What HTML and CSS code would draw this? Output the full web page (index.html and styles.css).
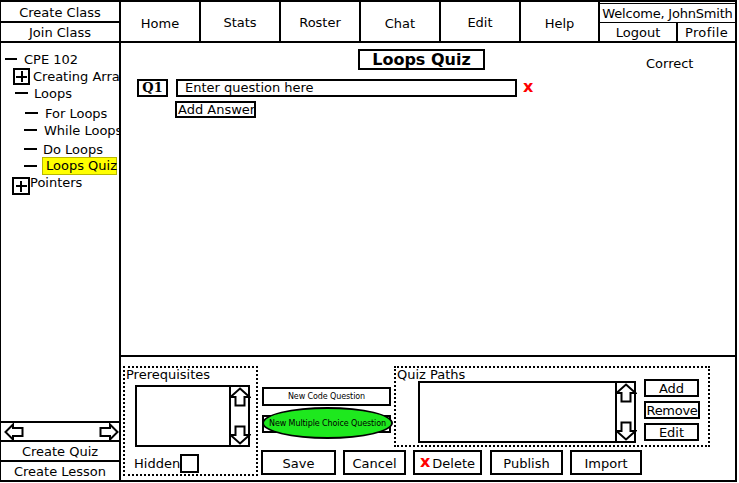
FILE: index.html
```html
<!DOCTYPE html>
<html>
<head>
<meta charset="utf-8">
<title>Loops Quiz</title>
<link rel="stylesheet" href="styles.css">
</head>
<body>
<div class="app">
  <aside class="side">
    <div class="side-btn tall">Create Class</div>
    <div class="side-btn std">Join Class</div>
    <div class="tree">
      <div class="node n1"><span class="dash d12"></span><span class="lbl g7">CPE 102</span></div>
      <div class="node n2"><span class="plus"></span><span class="lbl g3">Creating Arrays</span></div>
      <div class="node n3"><span class="dash"></span><span class="lbl g6">Loops</span></div>
      <div class="node n4"><span class="dash"></span><span class="lbl g7">For Loops</span></div>
      <div class="node n5"><span class="dash"></span><span class="lbl g7">While Loops</span></div>
      <div class="node n6"><span class="dash"></span><span class="lbl g6">Do Loops</span></div>
      <div class="node n7"><span class="dash"></span><span class="lbl hl">Loops Quiz</span></div>
      <div class="node n8"><span class="plus big"></span><span class="lbl up">Pointers</span></div>
    </div>
    <div class="hscroll">
      <svg class="harrow" width="20" height="18" viewBox="0 0 20 18"><path d="M1.5 9 L9 1.5 L9 5 L18.5 5 L18.5 13 L9 13 L9 16.5 Z"/></svg>
      <svg class="harrow" width="20" height="18" viewBox="0 0 20 18"><path d="M18.5 9 L11 1.5 L11 5 L1.5 5 L1.5 13 L11 13 L11 16.5 Z"/></svg>
    </div>
    <div class="side-btn std">Create Quiz</div>
    <div class="side-btn last">Create Lesson</div>
  </aside>

  <div class="content">
    <nav class="nav">
      <div class="nav-item low">Home</div>
      <div class="nav-item">Stats</div>
      <div class="nav-item">Roster</div>
      <div class="nav-item low">Chat</div>
      <div class="nav-item">Edit</div>
      <div class="nav-item help low">Help</div>
      <div class="user">
        <div class="welcome">Welcome, JohnSmith</div>
        <div class="user-links">
          <div class="logout">Logout</div>
          <div class="profile">Profile</div>
        </div>
      </div>
    </nav>

    <main class="editor">
      <div class="head">
        <div class="title">Loops Quiz</div>
        <div class="correct">Correct</div>
      </div>
      <div class="qrow">
        <div class="qnum">Q1</div>
        <div class="qinput">Enter question here</div>
        <span class="xmark">x</span>
      </div>
      <div class="add-answer">Add Answer</div>
    </main>

    <section class="panel">
      <div class="fs prereq">
        <div class="fs-label">Prerequisites</div>
        <div class="listwrap pre-list">
          <div class="list small"></div>
          <div class="vscroll">
            <svg class="varrow" width="22" height="20" viewBox="0 0 22 20"><path d="M11 1.5 L20.5 10 L15.5 10 L15.5 18.5 L6.5 18.5 L6.5 10 L1.5 10 Z"/></svg>
            <svg class="varrow" width="22" height="20" viewBox="0 0 22 20"><path d="M11 18.5 L20.5 10 L15.5 10 L15.5 1.5 L6.5 1.5 L6.5 10 L1.5 10 Z"/></svg>
          </div>
        </div>
        <div class="hidden-row"><span>Hidden</span><span class="check"></span></div>
      </div>

      <div class="rcol">
        <div class="rtop">
          <div class="qbtns">
            <div class="btn-code">New Code Question</div>
            <div class="mc">
              <div class="mc-rect"></div>
              <div class="mc-ellipse">New Multiple Choice Question</div>
            </div>
          </div>
          <div class="fs paths">
            <div class="fs-label">Quiz Paths</div>
            <div class="paths-row">
              <div class="listwrap">
                <div class="list wide"></div>
                <div class="vscroll">
                  <svg class="varrow" width="22" height="20" viewBox="0 0 22 20"><path d="M11 1.5 L20.5 10 L15.5 10 L15.5 18.5 L6.5 18.5 L6.5 10 L1.5 10 Z"/></svg>
                  <svg class="varrow" width="22" height="20" viewBox="0 0 22 20"><path d="M11 18.5 L20.5 10 L15.5 10 L15.5 1.5 L6.5 1.5 L6.5 10 L1.5 10 Z"/></svg>
                </div>
              </div>
              <div class="pbtns">
                <div class="pbtn">Add</div>
                <div class="pbtn remove">Remove</div>
                <div class="pbtn">Edit</div>
              </div>
            </div>
          </div>
        </div>
        <div class="actions">
          <div class="abtn w-save">Save</div>
          <div class="abtn w-cancel">Cancel</div>
          <div class="abtn w-delete"><span class="xmark small-x">x</span>Delete</div>
          <div class="abtn w-publish">Publish</div>
          <div class="abtn w-import">Import</div>
        </div>
      </div>
    </section>
  </div>
</div>
</body>
</html>
```

FILE: styles.css
```css
* { box-sizing: border-box; }
html, body { margin: 0; padding: 0; background: #fff; }
body {
  font-family: "DejaVu Sans", "Liberation Sans", sans-serif;
  font-size: 13px;
  color: #000;
}

.app {
  display: flex;
  width: 737px;
  height: 482px;
  border-top: 2px solid #000;
  border-left: 1px solid #000;
  border-bottom: 2px solid #000;
}

/* ---------- sidebar ---------- */
.side {
  width: 120px;
  flex: none;
  display: flex;
  flex-direction: column;
  border-right: 2px solid #000;
  overflow: hidden;
}
.side-btn {
  flex: none;
  display: flex;
  align-items: center;
  justify-content: center;
  border-bottom: 2px solid #000;
  white-space: nowrap;
  line-height: 1;
  padding-top: 1px;
}
.side-btn.tall { height: 21px; }
.side-btn.std { height: 20px; }
.side-btn.last { height: 18px; border-bottom: 0; }

.tree {
  flex: 1;
  min-height: 0;
  overflow: hidden;
}
.node {
  display: flex;
  align-items: center;
  white-space: nowrap;
  line-height: 15px;
}
.n1 { margin-top: 8px; height: 16px; padding-left: 4px; }
.n2 { margin-top: 1px; height: 17px; padding-left: 12px; }
.n3 { margin-top: 1px; height: 14px; padding-left: 14px; }
.n4 { margin-top: 5px; height: 16px; padding-left: 24px; }
.n5 { margin-top: 1px; height: 16px; padding-left: 23px; }
.n6 { margin-top: 3px; height: 16px; padding-left: 23px; }
.n7 { margin-top: 0; height: 18px; padding-left: 23px; }
.n8 { margin-top: 2px; height: 18px; padding-left: 11px; align-items: flex-start; }

.dash {
  flex: none;
  width: 13px;
  height: 2px;
  background: #000;
}
.dash.d12 { width: 12px; }
.lbl.g7 { margin-left: 7px; }
.lbl.g6 { margin-left: 6px; }
.lbl.g3 { margin-left: 3px; }
.lbl.up { margin-top: -2px; }
.lbl.hl {
  margin-left: 5px;
  width: 75px;
  height: 18px;
  padding-left: 3px;
  background: #ffff00;
  border: 1px solid #b8b800;
  line-height: 16px;
}

.plus {
  flex: none;
  width: 17px;
  height: 17px;
  border: 2px solid #000;
  background:
    linear-gradient(#000, #000) center / 11px 2px no-repeat,
    linear-gradient(#000, #000) center / 2px 11px no-repeat;
}
.plus.big { width: 18px; height: 18px; }

.hscroll {
  flex: none;
  height: 21px;
  border-top: 2px solid #000;
  border-bottom: 2px solid #000;
  display: flex;
  align-items: center;
  justify-content: space-between;
  padding-left: 3px;
}
.harrow { display: block; }
.harrow path, .varrow path {
  fill: #fff;
  stroke: #000;
  stroke-width: 2;
  stroke-linejoin: miter;
}

/* ---------- right side ---------- */
.content {
  flex: 1;
  min-width: 0;
  display: flex;
  flex-direction: column;
  border-right: 2px solid #000;
}

.nav {
  flex: none;
  height: 41px;
  display: flex;
  border-bottom: 2px solid #000;
}
.nav-item {
  width: 80px;
  border-right: 2px solid #000;
  display: flex;
  align-items: center;
  justify-content: center;
  padding-top: 2px;
}
.nav-item.low { padding-top: 4px; }
.nav-item.help { width: 79px; }

.user {
  flex: 1;
  display: flex;
  flex-direction: column;
  padding-top: 1px;
}
.welcome {
  height: 20px;
  border-top: 1px solid #000;
  border-bottom: 1px solid #000;
  display: flex;
  align-items: center;
  justify-content: center;
  font-size: 13px;
  letter-spacing: -0.2px;
  white-space: nowrap;
  overflow: hidden;
}
.user-links {
  flex: 1;
  display: flex;
}
.user-links > div {
  display: flex;
  align-items: center;
  justify-content: center;
  padding-top: 1px;
}
.logout { width: 78px; border-right: 2px solid #000; }
.profile { flex: 1; letter-spacing: 0.4px; }

.editor {
  flex: 1;
  min-height: 0;
  padding-top: 6px;
}
.head {
  display: flex;
  align-items: flex-start;
}
.title {
  margin-left: 237px;
  width: 127px;
  height: 21px;
  border: 2px solid #000;
  font-weight: bold;
  font-size: 16px;
  line-height: 18px;
  text-align: center;
}
.correct {
  margin-left: 161px;
  margin-top: 7px;
  line-height: 15px;
}
.qrow {
  display: flex;
  align-items: center;
  margin-top: 8px;
  padding-left: 16px;
}
.qnum {
  width: 31px;
  height: 18px;
  border: 2px solid #000;
  font-family: "DejaVu Serif", "Liberation Serif", serif;
  font-weight: bold;
  line-height: 14px;
  text-align: center;
}
.qinput {
  margin-left: 8px;
  width: 341px;
  height: 18px;
  border: 2px solid #000;
  padding-left: 7px;
  line-height: 14px;
}
.xmark {
  color: #ff0000;
  font-weight: bold;
  font-size: 16px;
  line-height: 14px;
  margin-left: 6px;
  margin-top: -2px;
}
.add-answer {
  margin: 4px 0 0 54px;
  width: 81px;
  height: 17px;
  border: 2px solid #000;
  padding-left: 1px;
  line-height: 13px;
  white-space: nowrap;
}

/* ---------- bottom panel ---------- */
.panel {
  flex: none;
  height: 125px;
  border-top: 2px solid #000;
  display: flex;
  padding: 9px 0 0 2px;
}
.fs { border: 2px dotted #000; }
.fs-label {
  line-height: 13px;
  padding-left: 1px;
  white-space: nowrap;
}
.prereq {
  width: 135px;
  height: 110px;
  display: flex;
  flex-direction: column;
}
.listwrap { display: flex; }
.pre-list { margin: 4px 0 0 10px; }
.list {
  height: 62px;
  border: 2px solid #000;
  background: #fff;
}
.list.small { width: 96px; }
.list.wide { width: 199px; }
.vscroll {
  width: 21px;
  height: 62px;
  margin-left: -2px;
  border: 2px solid #000;
  display: flex;
  flex-direction: column;
  justify-content: space-between;
  align-items: center;
}
.varrow {
  display: block;
  flex: none;
  margin: 0 -2px;
}
.hidden-row {
  display: flex;
  align-items: center;
  margin: 7px 0 0 9px;
}
.check {
  width: 19px;
  height: 19px;
  border: 2px solid #000;
}

.rcol {
  margin-left: 3px;
  display: flex;
  flex-direction: column;
}
.rtop {
  display: flex;
  height: 81px;
}
.qbtns {
  width: 133px;
  padding: 21px 0 0 1px;
  display: flex;
  flex-direction: column;
}
.btn-code {
  width: 129px;
  height: 19px;
  border: 2px solid #000;
  display: flex;
  align-items: center;
  justify-content: center;
  font-size: 8px;
  letter-spacing: -0.1px;
  white-space: nowrap;
}
.mc {
  display: grid;
  width: 131px;
  height: 32px;
  margin-top: 1px;
}
.mc > * { grid-area: 1 / 1; }
.mc-rect {
  align-self: center;
  width: 129px;
  height: 18px;
  margin-top: 2px;
  border: 2px solid #000;
}
.mc-ellipse {
  border: 2px solid #000;
  border-radius: 50%;
  background: #1ee81e;
  display: flex;
  align-items: center;
  justify-content: center;
  font-size: 8px;
  letter-spacing: -0.1px;
  white-space: nowrap;
}

.paths {
  width: 316px;
  height: 81px;
}
.paths-row {
  display: flex;
  align-items: flex-start;
  padding-left: 22px;
}
.pbtns {
  margin: -2px 0 0 8px;
  display: flex;
  flex-direction: column;
  gap: 4px;
}
.pbtn {
  width: 55px;
  height: 18px;
  border: 2px solid #000;
  display: flex;
  align-items: center;
  justify-content: center;
  white-space: nowrap;
}
.pbtn.remove { width: 56px; letter-spacing: -0.3px; }

.actions {
  display: flex;
  gap: 7px;
  margin-top: 3px;
}
.abtn {
  height: 25px;
  border: 2px solid #000;
  display: flex;
  align-items: center;
  justify-content: center;
  white-space: nowrap;
  padding-top: 1px;
}
.w-save { width: 75px; }
.w-cancel { width: 63px; }
.w-delete { width: 69px; }
.w-publish { width: 73px; margin-left: 1px; }
.w-import { width: 72px; }
.small-x { margin: -2px 2px 0 0; }
```
